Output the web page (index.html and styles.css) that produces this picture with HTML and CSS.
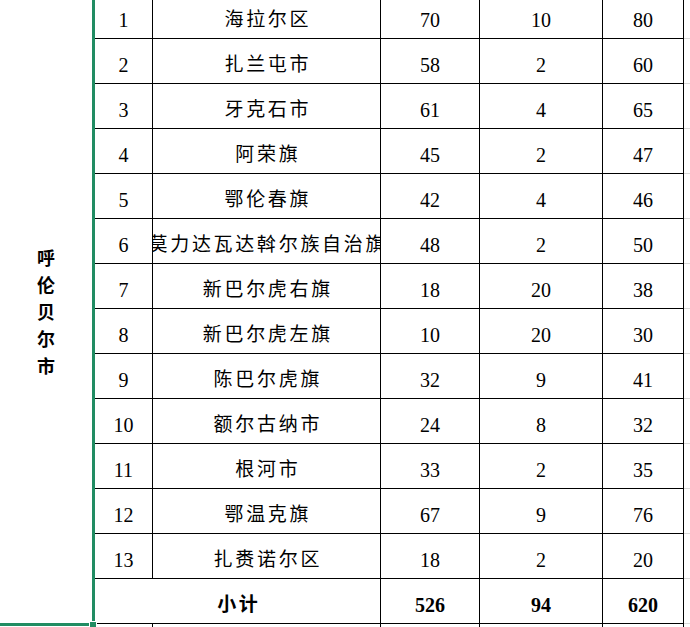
FILE: index.html
```html
<!DOCTYPE html>
<html lang="zh-CN">
<head>
<meta charset="utf-8">
<title>呼伦贝尔市</title>
<link rel="stylesheet" href="styles.css">
</head>
<body>
<div class="viewport">
  <div class="sheet">
    <div class="city">呼伦贝尔市</div>

    <div class="c idx">1</div><div class="c name">海拉尔区</div><div class="c">70</div><div class="c">10</div><div class="c">80</div><div class="g"></div>
    <div class="c idx">2</div><div class="c name">扎兰屯市</div><div class="c">58</div><div class="c">2</div><div class="c">60</div><div class="g"></div>
    <div class="c idx">3</div><div class="c name">牙克石市</div><div class="c">61</div><div class="c">4</div><div class="c">65</div><div class="g"></div>
    <div class="c idx">4</div><div class="c name">阿荣旗</div><div class="c">45</div><div class="c">2</div><div class="c">47</div><div class="g"></div>
    <div class="c idx">5</div><div class="c name">鄂伦春旗</div><div class="c">42</div><div class="c">4</div><div class="c">46</div><div class="g"></div>
    <div class="c idx">6</div><div class="c name">莫力达瓦达斡尔族自治旗</div><div class="c">48</div><div class="c">2</div><div class="c">50</div><div class="g"></div>
    <div class="c idx">7</div><div class="c name">新巴尔虎右旗</div><div class="c">18</div><div class="c">20</div><div class="c">38</div><div class="g"></div>
    <div class="c idx">8</div><div class="c name">新巴尔虎左旗</div><div class="c">10</div><div class="c">20</div><div class="c">30</div><div class="g"></div>
    <div class="c idx">9</div><div class="c name">陈巴尔虎旗</div><div class="c">32</div><div class="c">9</div><div class="c">41</div><div class="g"></div>
    <div class="c idx">10</div><div class="c name">额尔古纳市</div><div class="c">24</div><div class="c">8</div><div class="c">32</div><div class="g"></div>
    <div class="c idx">11</div><div class="c name">根河市</div><div class="c">33</div><div class="c">2</div><div class="c">35</div><div class="g"></div>
    <div class="c idx">12</div><div class="c name">鄂温克旗</div><div class="c">67</div><div class="c">9</div><div class="c">76</div><div class="g"></div>
    <div class="c idx">13</div><div class="c name">扎赉诺尔区</div><div class="c">18</div><div class="c">2</div><div class="c">20</div><div class="g"></div>
    <div class="c bold total name">小计</div><div class="c bold">526</div><div class="c bold">94</div><div class="c bold">620</div><div class="g"></div>

    <div class="blank"></div><div class="c"></div><div class="c"></div><div class="c"></div><div class="c"></div><div class="c"></div><div class="g"></div>
  </div>
  <div class="selection"><span class="handle"></span></div>
</div>
</body>
</html>
```

FILE: styles.css
```css
html, body {
  margin: 0;
  padding: 0;
  background: #ffffff;
}

.viewport {
  position: relative;
  width: 690px;
  height: 627px;
  overflow: hidden;
  background: #ffffff;
}

.sheet {
  display: grid;
  grid-template-columns: 95px 58px 228px 99px 123px 81px 1fr;
  grid-template-rows: repeat(14, 45px) 40px;
  margin-top: -6px;
  font-family: "Liberation Serif", "Noto Sans CJK SC", serif;
  font-size: 20px;
  color: #000000;
}

.city {
  grid-column: 1;
  grid-row: 1 / span 14;
  display: flex;
  align-items: center;
  justify-content: center;
  box-sizing: border-box;
  padding: 5px 40px 0 37px;
  font-family: "Noto Sans CJK SC", sans-serif;
  font-weight: 700;
  font-size: 18px;
  line-height: 27px;
  text-align: center;
  word-break: break-all;
}

.c {
  box-sizing: border-box;
  border-right: 1px solid #000000;
  border-bottom: 1px solid #000000;
  display: flex;
  align-items: center;
  justify-content: center;
  padding-top: 7px;
  line-height: 22px;
  white-space: nowrap;
  overflow: hidden;
}

.name {
  font-size: 19px;
  letter-spacing: 2.7px;
  padding-left: 2.7px;
}

.bold {
  font-weight: 700;
}

.total {
  grid-column: 2 / span 2;
}

.g {
  box-sizing: border-box;
  border-bottom: 1px solid #d9d9d9;
}

.blank {
  box-sizing: border-box;
}

.selection {
  position: absolute;
  left: -10px;
  top: -10px;
  width: 105px;
  height: 636px;
  box-sizing: border-box;
  border: 3px solid #218c63;
  pointer-events: none;
}

.handle {
  position: absolute;
  right: -5px;
  bottom: -6px;
  width: 6px;
  height: 6px;
  background: #218c63;
  border: 1px solid #ffffff;
}
```
